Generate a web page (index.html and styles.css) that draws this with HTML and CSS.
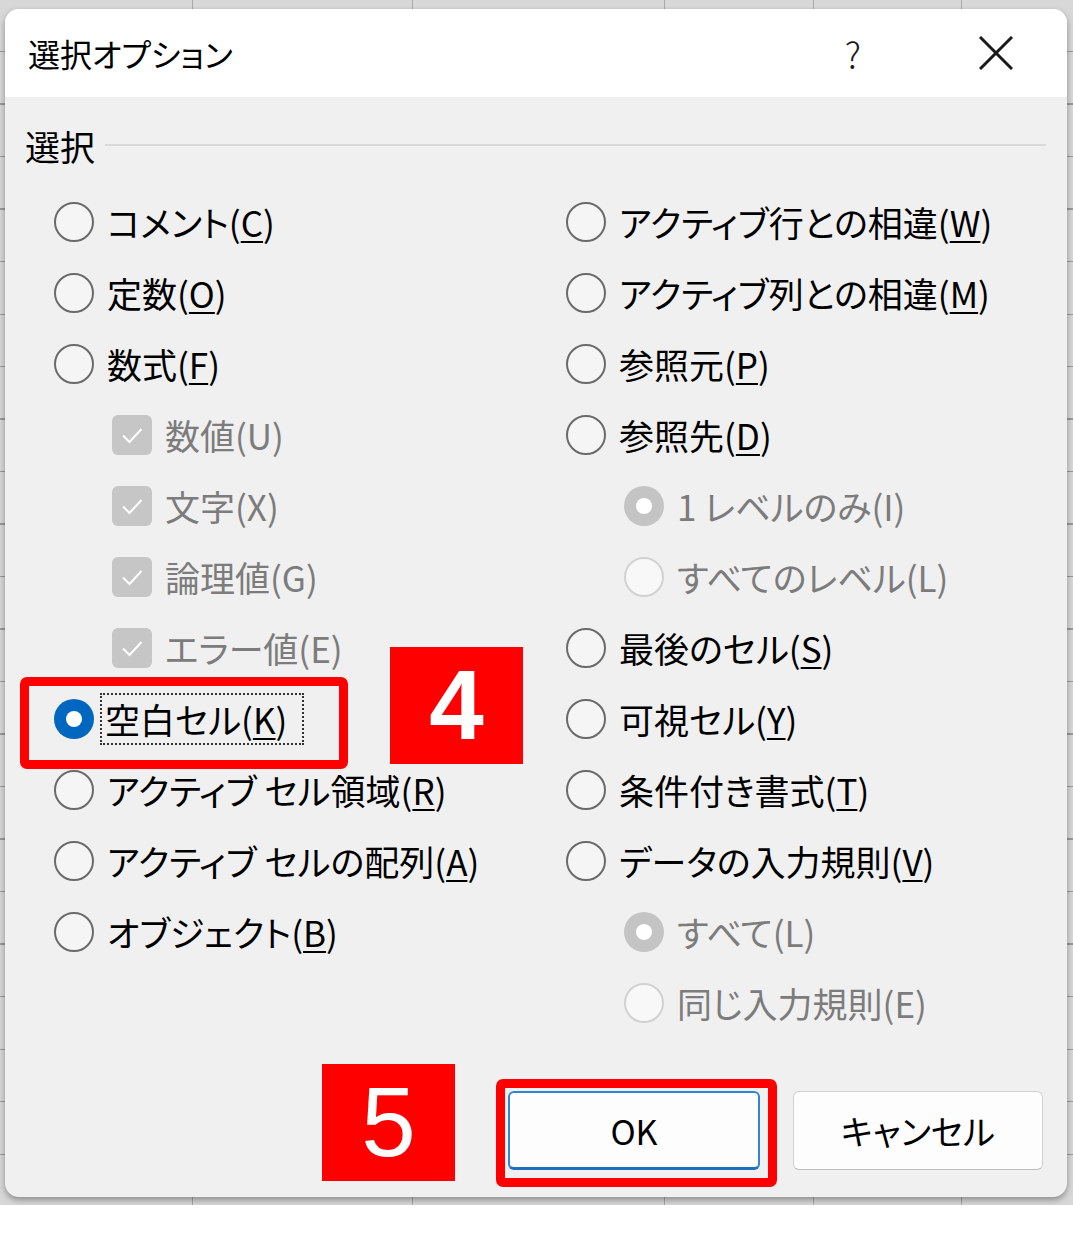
FILE: index.html
```html
<!DOCTYPE html>
<html lang="ja">
  <head>
    <meta charset="UTF-8" />
    <meta name="viewport" content="width=device-width, initial-scale=1.0" />
    <title>選択オプション</title>
    <link rel="stylesheet" href="styles.css">
  </head>
  <body>
    <div class="screen">
      <div class="dialog">
        <div class="titlebar">
          <span class="title">選択オプション</span>
          <span class="help">?</span>
          <svg class="close" width="34" height="34" viewBox="0 0 34 34">
            <path d="M1 1 L33 33 M33 1 L1 33" stroke="#1a1a1a" stroke-width="3" fill="none" />
          </svg>
        </div>

        <div class="content">
          <div class="group-title">
            <span>選択</span>
            <div class="rule"></div>
          </div>

          <div class="options">
            <div class="col">
              <div class="opt"><span class="radio"></span><span class="label">コメント(<u>C</u>)</span></div>
              <div class="opt"><span class="radio"></span><span class="label">定数(<u>O</u>)</span></div>
              <div class="opt"><span class="radio"></span><span class="label">数式(<u>F</u>)</span></div>
              <div class="opt sub disabled"><span class="check"><svg width="40" height="40" viewBox="0 0 40 40"><path d="M11 20.5 L17.5 27 L29.5 14" stroke="#fff" stroke-width="2" fill="none" /></svg></span><span class="label">数値(U)</span></div>
              <div class="opt sub disabled"><span class="check"><svg width="40" height="40" viewBox="0 0 40 40"><path d="M11 20.5 L17.5 27 L29.5 14" stroke="#fff" stroke-width="2" fill="none" /></svg></span><span class="label">文字(X)</span></div>
              <div class="opt sub disabled"><span class="check"><svg width="40" height="40" viewBox="0 0 40 40"><path d="M11 20.5 L17.5 27 L29.5 14" stroke="#fff" stroke-width="2" fill="none" /></svg></span><span class="label">論理値(G)</span></div>
              <div class="opt sub disabled"><span class="check"><svg width="40" height="40" viewBox="0 0 40 40"><path d="M11 20.5 L17.5 27 L29.5 14" stroke="#fff" stroke-width="2" fill="none" /></svg></span><span class="label">エラー値(E)</span></div>
              <div class="opt"><span class="radio on"></span><span class="label focus">空白セル(<u>K</u>)</span></div>
              <div class="opt"><span class="radio"></span><span class="label">アクティブ セル領域(<u>R</u>)</span></div>
              <div class="opt"><span class="radio"></span><span class="label">アクティブ セルの配列(<u>A</u>)</span></div>
              <div class="opt"><span class="radio"></span><span class="label">オブジェクト(<u>B</u>)</span></div>
            </div>

            <div class="col">
              <div class="opt"><span class="radio"></span><span class="label">アクティブ行との相違(<u>W</u>)</span></div>
              <div class="opt"><span class="radio"></span><span class="label">アクティブ列との相違(<u>M</u>)</span></div>
              <div class="opt"><span class="radio"></span><span class="label">参照元(<u>P</u>)</span></div>
              <div class="opt"><span class="radio"></span><span class="label">参照先(<u>D</u>)</span></div>
              <div class="opt sub disabled"><span class="radio on"></span><span class="label">1 レベルのみ(I)</span></div>
              <div class="opt sub disabled"><span class="radio"></span><span class="label">すべてのレベル(L)</span></div>
              <div class="opt"><span class="radio"></span><span class="label">最後のセル(<u>S</u>)</span></div>
              <div class="opt"><span class="radio"></span><span class="label">可視セル(<u>Y</u>)</span></div>
              <div class="opt"><span class="radio"></span><span class="label">条件付き書式(<u>T</u>)</span></div>
              <div class="opt"><span class="radio"></span><span class="label">データの入力規則(<u>V</u>)</span></div>
              <div class="opt sub disabled"><span class="radio on"></span><span class="label">すべて(L)</span></div>
              <div class="opt sub disabled"><span class="radio"></span><span class="label">同じ入力規則(E)</span></div>
            </div>
          </div>

          <div class="buttons">
            <button type="button" class="btn btn-default">OK</button>
            <button type="button" class="btn">キャンセル</button>
          </div>
        </div>
      </div>

      <div class="mark mark-frame frame-blank"></div>
      <div class="mark mark-num num-4">4</div>
      <div class="mark mark-num num-5">5</div>
      <div class="mark mark-frame frame-ok"></div>
    </div>
  </body>
</html>
```

FILE: styles.css
```css
body {
  margin: 0;
  background: #ffffff;
  font-family: "Noto Sans CJK JP", "Noto Sans", sans-serif;
}
.screen {
  position: relative;
  width: 1073px;
  height: 1205px;
  padding-top: 9px;
  box-sizing: border-box;
  background:
    linear-gradient(#a9a9a9, #a9a9a9) 192px 0 / 1px 100% no-repeat,
    linear-gradient(#a9a9a9, #a9a9a9) 412px 0 / 1px 100% no-repeat,
    linear-gradient(#a9a9a9, #a9a9a9) 664px 0 / 1px 100% no-repeat,
    linear-gradient(#a9a9a9, #a9a9a9) 813px 0 / 1px 100% no-repeat,
    linear-gradient(#a9a9a9, #a9a9a9) 961px 0 / 1px 100% no-repeat,
    repeating-linear-gradient(#d8d8d8 0, #d8d8d8 51px, #9a9a9a 51px, #9a9a9a 52.5px),
    #d8d8d8;
}
.dialog {
  margin-left: 5px;
  width: 1062px;
  height: 1188px;
  border-radius: 14px;
  overflow: hidden;
  background: #f0f0f0;
  box-shadow: 0 3px 6px rgba(0, 0, 0, 0.35);
  display: flex;
  flex-direction: column;
}
.titlebar {
  height: 88px;
  flex: none;
  background: #ffffff;
  display: flex;
  align-items: center;
  padding-left: 23px;
}
.title {
  flex: 1;
  font-size: 32px;
  color: #000;
  font-feature-settings: "palt";
}
.help {
  font-size: 36px;
  font-weight: 300;
  color: #1a1a1a;
  margin-right: 118px;
}
.close {
  margin-right: 54px;
}
.content {
  flex: 1;
  display: flex;
  flex-direction: column;
  padding: 22px 24px 27px 20px;
}
.group-title {
  height: 52px;
  display: flex;
  align-items: center;
  font-size: 35px;
  color: #000;
}
.rule {
  flex: 1;
  height: 2px;
  margin-left: 10px;
  margin-right: -3px;
  background: #dadada;
}
.options {
  display: grid;
  grid-template-columns: 512px 1fr;
  margin-top: 15px;
  padding-left: 29px;
}
.opt {
  height: 71px;
  display: flex;
  align-items: center;
  gap: 13px;
}
.opt.sub {
  padding-left: 58px;
}
.label {
  font-size: 35px;
  color: #000;
  font-feature-settings: "palt";
  white-space: nowrap;
  line-height: 48px;
}
.label u {
  text-decoration-thickness: 2px;
  text-underline-offset: 4px;
}
.label.focus {
  border: 2px dotted #333;
  padding: 0 15px 0 3px;
  margin-left: -7px;
}
.disabled .label {
  color: #7c7c7c;
}
.radio {
  width: 40px;
  height: 40px;
  box-sizing: border-box;
  border-radius: 50%;
  border: 2px solid #6a6a6a;
  background: #f5f5f5;
  flex: none;
  position: relative;
}
.radio.on {
  border: none;
  background: #0067c0;
}
.radio.on::after {
  content: "";
  position: absolute;
  left: 12px;
  top: 12px;
  width: 16px;
  height: 16px;
  border-radius: 50%;
  background: #ffffff;
}
.disabled .radio {
  border-color: #d2d2d2;
  background: #f8f8f8;
}
.disabled .radio.on {
  background: #c4c4c4;
}
.check {
  width: 40px;
  height: 40px;
  border-radius: 6px;
  background: #c6c6c6;
  flex: none;
  display: flex;
}
.buttons {
  margin-top: auto;
  display: flex;
  justify-content: flex-end;
  gap: 33px;
}
.btn {
  width: 250px;
  height: 79px;
  border: 1px solid #d0d0d0;
  border-bottom-color: #bdbdbd;
  border-radius: 6px;
  background: #fdfdfd;
  font-family: "Noto Sans CJK JP", "Noto Sans", sans-serif;
  font-size: 34px;
  color: #000;
  font-feature-settings: "palt";
}
.btn-default {
  width: 252px;
  border: 2px solid #2d86d6;
  border-bottom-width: 3px;
  border-bottom-color: #1f6fbe;
}
.mark {
  position: absolute;
  box-sizing: border-box;
}
.mark-frame {
  border: 9px solid #ff0000;
  border-radius: 7px;
}
.frame-blank {
  left: 20px;
  top: 677px;
  width: 328px;
  height: 92px;
}
.frame-ok {
  left: 496px;
  top: 1079px;
  width: 281px;
  height: 108px;
}
.mark-num {
  width: 133px;
  height: 117px;
  background: #ff0000;
  color: #ffffff;
  font-family: "Liberation Sans", Arial, sans-serif;
  font-size: 98px;
  line-height: 117px;
  text-align: center;
}
.num-4 {
  left: 390px;
  top: 647px;
  font-weight: bold;
}
.num-5 {
  left: 322px;
  top: 1064px;
}
```
